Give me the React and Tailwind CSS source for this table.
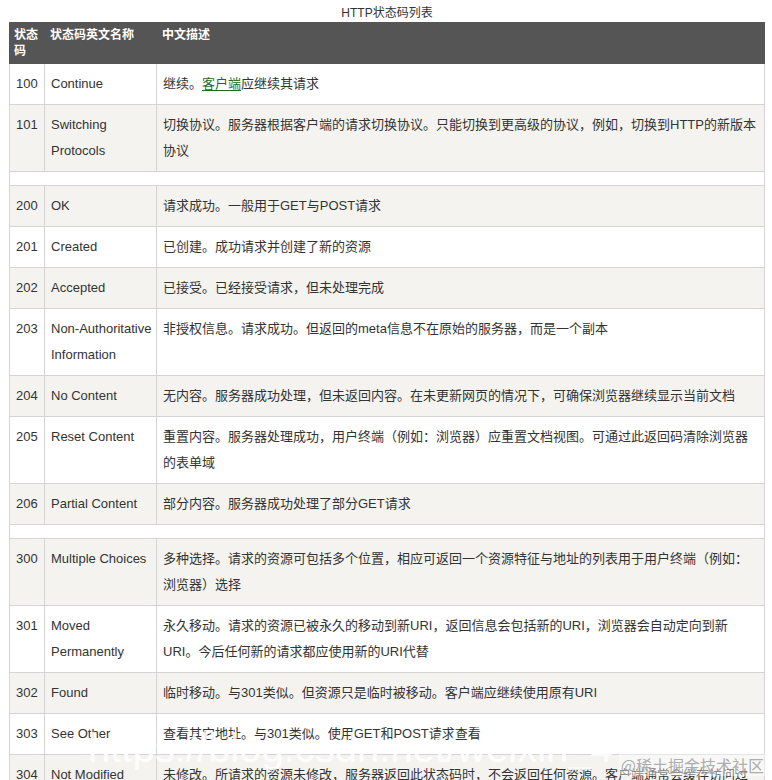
import React from "react";

const rows = [
  { code: "100", name: "Continue", desc: "link" },
  {
    code: "101",
    name: "Switching Protocols",
    desc: "切换协议。服务器根据客户端的请求切换协议。只能切换到更高级的协议，例如，切换到HTTP的新版本协议",
  },
  { spacer: true },
  { code: "200", name: "OK", desc: "请求成功。一般用于GET与POST请求" },
  { code: "201", name: "Created", desc: "已创建。成功请求并创建了新的资源" },
  { code: "202", name: "Accepted", desc: "已接受。已经接受请求，但未处理完成" },
  {
    code: "203",
    name: "Non-Authoritative Information",
    desc: "非授权信息。请求成功。但返回的meta信息不在原始的服务器，而是一个副本",
  },
  {
    code: "204",
    name: "No Content",
    desc: "无内容。服务器成功处理，但未返回内容。在未更新网页的情况下，可确保浏览器继续显示当前文档",
  },
  {
    code: "205",
    name: "Reset Content",
    desc: "重置内容。服务器处理成功，用户终端（例如：浏览器）应重置文档视图。可通过此返回码清除浏览器的表单域",
  },
  { code: "206", name: "Partial Content", desc: "部分内容。服务器成功处理了部分GET请求" },
  { spacer: true },
  {
    code: "300",
    name: "Multiple Choices",
    desc: "多种选择。请求的资源可包括多个位置，相应可返回一个资源特征与地址的列表用于用户终端（例如：浏览器）选择",
  },
  {
    code: "301",
    name: "Moved Permanently",
    desc: "永久移动。请求的资源已被永久的移动到新URI，返回信息会包括新的URI，浏览器会自动定向到新URI。今后任何新的请求都应使用新的URI代替",
  },
  {
    code: "302",
    name: "Found",
    desc: "临时移动。与301类似。但资源只是临时被移动。客户端应继续使用原有URI",
  },
  { code: "303", name: "See Other", desc: "查看其它地址。与301类似。使用GET和POST请求查看" },
  {
    code: "304",
    name: "Not Modified",
    desc: "未修改。所请求的资源未修改，服务器返回此状态码时，不会返回任何资源。客户端通常会缓存访问过的资源，通过提供一个头信息指出客户端希望只返回在指定日期之后修改的资源",
  },
];

const font = "font-['Liberation_Sans','Noto_Sans_CJK_SC',sans-serif]";

function App() {
  return (
    <div className={`relative h-[780px] overflow-hidden bg-white text-[#333] ${font}`}>
      <table className="ml-[9px] w-[756px] table-fixed border-collapse text-[13px] leading-[26px]">
        <caption className="h-[22px] pt-[5px] text-[12px] leading-[16px] text-[#333]">
          HTTP状态码列表
        </caption>
        <colgroup>
          <col className="w-[35px]" />
          <col className="w-[112px]" />
          <col />
        </colgroup>
        <thead>
          <tr className="bg-[#555] text-left align-top text-[12px] font-bold leading-[16px] text-white">
            <th className="border border-[#555] py-[4px] pl-[4px] pr-0">状态码</th>
            <th className="border border-[#555] px-[5px] py-[4px]">状态码英文名称</th>
            <th className="border border-[#555] px-[5px] py-[4px]">中文描述</th>
          </tr>
        </thead>
        <tbody>
          {rows.map((r, i) => {
            const bg = i % 2 === 1 ? "bg-[#f4f3f0]" : "bg-white";
            if (r.spacer) {
              return (
                <tr key={i} className={bg}>
                  <td colSpan={3} className="h-[14px] border border-[#d4d4d4] p-0"></td>
                </tr>
              );
            }
            return (
              <tr key={i} className={`${bg} align-top`}>
                <td className="border border-[#d4d4d4] py-[7px] pl-[6px] pr-[4px]">{r.code}</td>
                <td className="border border-[#d4d4d4] py-[7px] pl-[6px] pr-[3px]">{r.name}</td>
                <td className="border border-[#d4d4d4] py-[7px] pl-[6px] pr-[6px]">
                  {r.desc === "link" ? (
                    <>
                      继续。
                      <a className="text-[#1e6b1e] underline underline-offset-2">客户端</a>
                      应继续其请求
                    </>
                  ) : (
                    r.desc
                  )}
                </td>
              </tr>
            );
          })}
        </tbody>
      </table>

      <div className="pointer-events-none absolute left-[88px] top-[724px] whitespace-nowrap font-['Liberation_Sans',sans-serif] text-[40px] leading-[48px] text-white/85">
        https://blog.csdn.net/weixin_4
      </div>
      <div className="pointer-events-none absolute right-[6px] top-[754px] whitespace-nowrap bg-white/40 px-[2px] font-['Noto_Sans_CJK_SC',sans-serif] text-[16px] leading-[22px] text-[#999]/80">
        @稀土掘金技术社区
      </div>
    </div>
  );
}

export default App;
